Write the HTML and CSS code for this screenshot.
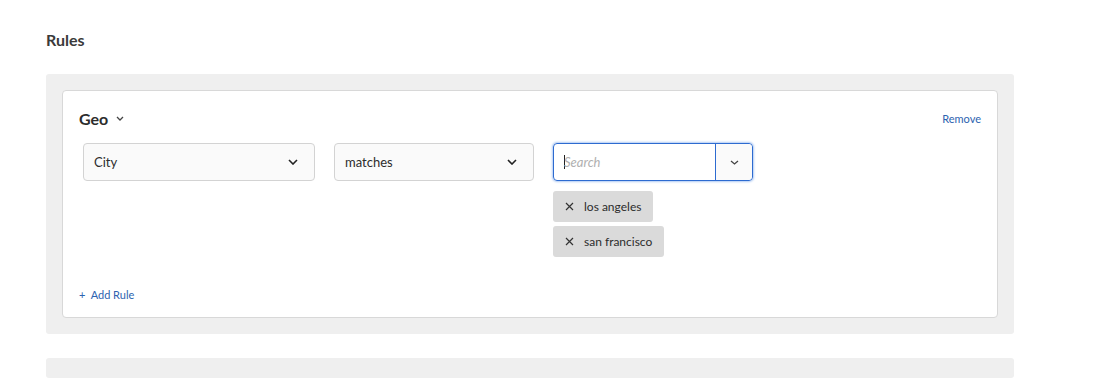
FILE: index.html
```html
<!DOCTYPE html>
<html lang="en">
<head>
    <meta charset="UTF-8">
    <title>Rules</title>
    <link rel="stylesheet" href="styles.css">
</head>
<body>
    <div class="page">
        <h2 class="title">Rules</h2>
        <div class="panel">
            <div class="card">
                <div class="card-head">
                    <div class="group-name">Geo
                        <svg class="chev-sm" width="8" height="5" viewBox="0 0 8 5"><path d="M1 1l3 3 3-3" fill="none" stroke="#444" stroke-width="1.3"/></svg>
                    </div>
                    <a href="#" class="link">Remove</a>
                </div>
                <div class="rule-row">
                    <div class="select select-wide">
                        <span>City</span>
                        <svg width="10" height="6" viewBox="0 0 10 6"><path d="M1 1l4 4 4-4" fill="none" stroke="#222" stroke-width="1.6"/></svg>
                    </div>
                    <div class="select">
                        <span>matches</span>
                        <svg width="10" height="6" viewBox="0 0 10 6"><path d="M1 1l4 4 4-4" fill="none" stroke="#222" stroke-width="1.6"/></svg>
                    </div>
                    <div class="values">
                        <div class="combo">
                            <div class="combo-input"><span class="caret"></span><span class="placeholder">Search</span></div>
                            <div class="combo-btn">
                                <svg width="9" height="5" viewBox="0 0 9 5"><path d="M1 1l3.5 3 3.5-3" fill="none" stroke="#444" stroke-width="1.3"/></svg>
                            </div>
                        </div>
                        <div class="tag">
                            <svg width="9" height="9" viewBox="0 0 9 9"><path d="M1 1l7 7M8 1l-7 7" stroke="#333" stroke-width="1.2"/></svg>
                            <span>los angeles</span>
                        </div>
                        <div class="tag">
                            <svg width="9" height="9" viewBox="0 0 9 9"><path d="M1 1l7 7M8 1l-7 7" stroke="#333" stroke-width="1.2"/></svg>
                            <span>san francisco</span>
                        </div>
                    </div>
                </div>
                <a href="#" class="link add-rule">+&nbsp;&nbsp;Add Rule</a>
            </div>
        </div>
        <div class="panel panel-next"></div>
    </div>
</body>
</html>
```

FILE: styles.css
```css
body {
    margin: 0;
    font-family: Lato, "Open Sans", sans-serif;
    background-color: #fff;
    color: #2c2c2c;
    overflow: hidden;
    height: 378px;
}
.page {
    width: 968px;
    padding: 30px 0 0 46px;
}
.title {
    margin: 0 0 24px;
    font-size: 16px;
    font-weight: 700;
    line-height: 20px;
    color: #3a3a3a;
}
.panel {
    background-color: #efefef;
    border-radius: 3px;
    padding: 16px;
}
.panel-next {
    margin-top: 24px;
    padding: 0;
    height: 20px;
}
.card {
    background-color: #fff;
    border: 1px solid #d8d8d8;
    border-radius: 4px;
    padding: 17px 16px 16px 16px;
    height: 193px;
    display: flex;
    flex-direction: column;
}
.card-head {
    display: flex;
    justify-content: space-between;
    align-items: center;
    height: 20px;
}
.group-name {
    font-size: 16px;
    font-weight: 700;
    color: #2c2c2c;
    display: flex;
    align-items: center;
    gap: 8px;
}
.link {
    color: #2d63b0;
    font-size: 11px;
    text-decoration: none;
}
.rule-row {
    display: flex;
    align-items: flex-start;
    gap: 19px;
    margin: 15px 0 0 4px;
}
.select {
    box-sizing: border-box;
    width: 200px;
    height: 38px;
    background-color: #fafafa;
    border: 1px solid #d3d3d3;
    border-radius: 4px;
    display: flex;
    align-items: center;
    justify-content: space-between;
    padding: 0 16px 0 10px;
    font-size: 13px;
    color: #2c2c2c;
}
.select-wide {
    width: 232px;
}
.values {
    display: flex;
    flex-direction: column;
    align-items: flex-start;
    gap: 4px;
}
.combo {
    box-sizing: border-box;
    width: 200px;
    height: 38px;
    border: 1px solid #2d6bd0;
    border-radius: 4px;
    box-shadow: 0 0 2px 1px rgba(80, 140, 230, 0.45);
    display: flex;
    margin-bottom: 6px;
}
.combo-input {
    flex: 1;
    display: flex;
    align-items: center;
    padding-left: 10px;
    border-right: 1px solid #2d6bd0;
}
.caret {
    width: 1px;
    height: 14px;
    background-color: #222;
}
.placeholder {
    font-size: 13px;
    font-style: italic;
    color: #b0b0b0;
    margin-left: -1px;
}
.combo-btn {
    width: 36px;
    background-color: #fafafa;
    border-radius: 0 4px 4px 0;
    display: flex;
    align-items: center;
    justify-content: center;
}
.tag {
    height: 31px;
    background-color: #dadada;
    border-radius: 3px;
    display: flex;
    align-items: center;
    gap: 10px;
    padding: 0 12px;
    font-size: 12px;
    color: #2c2c2c;
}
.add-rule {
    margin-top: auto;
}
```
